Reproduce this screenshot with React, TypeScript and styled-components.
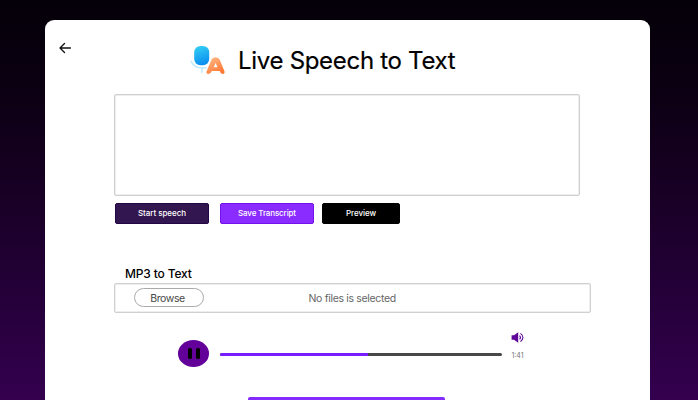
import React from "react";
import styled, { createGlobalStyle } from "styled-components";

const GlobalStyle = createGlobalStyle`
  *, *::before, *::after { box-sizing: border-box; }
  html, body { margin: 0; height: 100%; overflow: hidden; }
  body { background: #000; font-family: Inter, "Liberation Sans", sans-serif; color: #000; }
  button { font-family: inherit; padding: 0; border: 0; }
  svg { display: block; }
`;

const Page = styled.div`
  height: 400px;
  padding: 19.5px 0 0 44.6px;
  overflow: hidden;
  background: linear-gradient(180deg, #040008 0%, #0b0012 22%, #1b0029 54%, #25003a 75%, #34004f 100%);
`;

const Card = styled.main`
  display: flex;
  flex-direction: column;
  width: 605px;
  height: 400px;
  padding-left: 69.4px;
  border-radius: 9px;
  background: #fff;
`;

const Header = styled.header`
  display: flex;
  height: 74.5px;
  margin-left: -56px;
`;

const BackButton = styled.button`
  width: 14px;
  height: 14px;
  margin: 21.5px 117px 0 0;
  background: none;
`;

const Logo = styled.svg`
  flex: none;
  width: 38px;
  height: 34px;
  margin: 23.5px 11px 0 0;
`;

const Title = styled.h1`
  margin: 25px 0 0;
  font-size: 24px;
  line-height: 32px;
  font-weight: 400;
  letter-spacing: -0.3px;
  white-space: nowrap;
  -webkit-text-stroke: 0.2px #000;
`;

const Transcript = styled.section`
  flex: none;
  width: 466px;
  height: 102px;
  border: 1px solid #cfcfcf;
  border-radius: 2px;
  box-shadow: inset 0 0 0 0.5px #dedede;
`;

const Actions = styled.div`
  display: flex;
  margin: 6.5px 0 0 1px;
`;

const ActionButton = styled.button<{
  $fill: string;
  $edge: string;
  $width?: number;
  $gap?: number;
  $drop?: number;
  $tracking?: number;
}>`
  width: ${(p) => p.$width ?? 94}px;
  height: 21px;
  margin: ${(p) => p.$drop ?? 0}px ${(p) => p.$gap ?? 0}px 0 0;
  border: 1px solid ${(p) => p.$edge};
  border-radius: 2px;
  background: ${(p) => p.$fill};
  color: #fff;
  font-size: 8px;
  line-height: 19px;
  font-weight: 500;
  letter-spacing: ${(p) => p.$tracking ?? 0}px;
  white-space: nowrap;
`;

const SectionLabel = styled.h2`
  margin: 40.5px 0 0 11px;
  font-size: 12px;
  line-height: 18px;
  font-weight: 500;
  letter-spacing: -0.15px;
`;

const FileRow = styled.div`
  display: flex;
  align-items: center;
  flex: none;
  width: 477px;
  height: 30px;
  padding-left: 19px;
  border: 1px solid #d0d0d0;
  border-radius: 2px;
  box-shadow: inset 0 0 0 0.5px #dedede;
`;

const BrowseButton = styled.button`
  width: 70px;
  height: 19px;
  border: 1px solid #aaa;
  border-radius: 10px;
  background: #fff;
  color: #484848;
  font-size: 10.5px;
  line-height: 17px;
  letter-spacing: -0.4px;
  padding: 1px 3px 0 0;
`;

const FileStatus = styled.span`
  padding-top: 1px;
  margin-left: 104.5px;
  color: #666;
  font-size: 10.5px;
  letter-spacing: -0.33px;
`;

const Player = styled.div`
  display: flex;
  height: 84px;
  margin-left: 64px;
`;

const PauseButton = styled.button`
  display: flex;
  align-items: center;
  justify-content: center;
  gap: 4px;
  width: 31.5px;
  height: 27px;
  margin: 27px 10.5px 0 0;
  border-radius: 50%;
  background: #64009a;
`;

const PauseBar = styled.i`
  width: 4px;
  height: 11.5px;
  border-radius: 1.5px;
  background: #000;
`;

const Track = styled.div`
  width: 282px;
  height: 3px;
  margin-top: 40.7px;
  border-radius: 2px;
  overflow: hidden;
  background: #484848;
`;

const Progress = styled.div`
  width: 148px;
  height: 100%;
  background: #791bff;
`;

const Volume = styled.div`
  display: flex;
  flex-direction: column;
  gap: 8px;
  margin: 19.2px 0 0 9.5px;
`;

const Time = styled.span`
  font-size: 7px;
  line-height: 10px;
  color: #777;
`;

const SubmitButton = styled.button`
  flex: none;
  width: 197px;
  height: 22px;
  margin-left: 134px;
  border-radius: 2px;
  background: #842bff;
`;

function SpeechLogo() {
  return (
    <Logo viewBox="0 0 38 34" aria-hidden="true">
      <defs>
        <linearGradient id="mic" x1="0" y1="0" x2="0.3" y2="1">
          <stop stopColor="#37d1f5" />
          <stop offset="1" stopColor="#0c91ef" />
        </linearGradient>
        <linearGradient id="letter" x1="0" y1="0" x2="0.6" y2="1">
          <stop stopColor="#ffc08e" />
          <stop offset="1" stopColor="#ff7836" />
        </linearGradient>
      </defs>
      <path d="M2.2 18.5C4 22.6 7.5 24.8 13 24.8H17M12.8 25V29" fill="none" stroke="#c4ecff" strokeWidth="1.8" strokeLinecap="round" />
      <rect x="5.2" y="3" width="15" height="19.3" rx="6.2" fill="url(#mic)" />
      <path
        d="M19.3 29.2L24.6 17.4Q26.6 14.7 29 17.4L33.8 29.2M22.5 26.7H31"
        fill="none"
        stroke="#fff"
        strokeWidth="5.3"
        strokeLinecap="round"
        strokeLinejoin="round"
      />
      <path
        fillRule="evenodd"
        fill="url(#letter)"
        d="M22.4 16.7Q23.3 14.2 26.5 14.2Q29.6 14.2 30.7 16.7L35.5 28.3Q36.1 31 33.5 31Q31.5 31 30.7 28.1H22.8Q21.6 31 19.5 31Q16.8 30.9 17.6 28.3ZM26.6 19.9L24.7 24.2H28.5Z"
      />
    </Logo>
  );
}

function BackIcon() {
  return (
    <svg width="14" height="14" viewBox="0 0 14 14" fill="none" stroke="#111" strokeWidth="1.35" strokeLinecap="round" strokeLinejoin="round">
      <path d="M12.4 7H2.2M6.5 2.5L2 7L6.5 11.5" />
    </svg>
  );
}

function VolumeIcon() {
  return (
    <svg width="13" height="11" viewBox="0 0 13 11" fill="none" stroke="#5e0799">
      <path d="M.6 3.2H3L7.2.3V10.7L3 7.8H.6Z" fill="#5e0799" stroke="none" />
      <path d="M8.6 3.6Q10.4 5.5 8.6 7.4M9.5 1.4Q14.4 5.5 9.5 9.6" strokeWidth="1.1" />
    </svg>
  );
}

export default function App() {
  return (
    <>
      <GlobalStyle />
      <Page>
        <Card>
          <Header>
            <BackButton aria-label="Back"><BackIcon /></BackButton>
            <SpeechLogo />
            <Title>Live Speech to Text</Title>
          </Header>
          <Transcript aria-label="Transcript" />
          <Actions>
            <ActionButton $fill="#32164f" $edge="#230646" $gap={11} $tracking={-0.06}>Start speech</ActionButton>
            <ActionButton $fill="#8a2bff" $edge="#7412ef" $gap={8} $tracking={-0.13}>Save Transcript</ActionButton>
            <ActionButton $fill="#000" $edge="#000" $width={78} $drop={0.8} $tracking={-0.06}>Preview</ActionButton>
          </Actions>
          <SectionLabel>MP3 to Text</SectionLabel>
          <FileRow>
            <BrowseButton>Browse</BrowseButton>
            <FileStatus>No files is selected</FileStatus>
          </FileRow>
          <Player>
            <PauseButton aria-label="Pause"><PauseBar /><PauseBar /></PauseButton>
            <Track><Progress /></Track>
            <Volume>
              <VolumeIcon />
              <Time>1:41</Time>
            </Volume>
          </Player>
          <SubmitButton aria-label="Convert" />
        </Card>
      </Page>
    </>
  );
}
